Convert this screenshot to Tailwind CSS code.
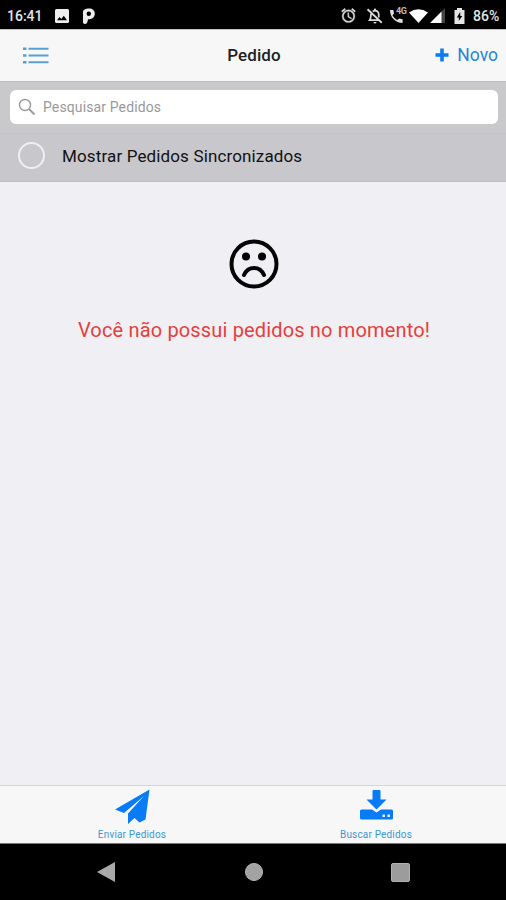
<!DOCTYPE html>
<html lang="pt-BR">
<head>
<meta charset="utf-8">
<meta name="viewport" content="width=device-width, initial-scale=1">
<title>Pedido</title>
<script src="https://cdn.jsdelivr.net/npm/@tailwindcss/browser@4"></script>
</head>
<body class="flex h-[900px] w-[506px] flex-col overflow-hidden bg-[#efeff4] font-['Roboto',sans-serif] text-black">
  <!-- Status bar -->
  <div class="flex h-[29px] shrink-0 items-center bg-black pt-[2px] pl-[7px] text-[#e4e4e4]">
    <span class="w-[48px] text-[14px] leading-none font-medium whitespace-nowrap">16:41</span>
    <svg class="h-[14px] w-[14px]" viewBox="0 0 14 14"><path fill="#eee" fill-rule="evenodd" d="M1.500 0h11A1.500 1.500 0 0 1 14 1.500v11a1.500 1.500 0 0 1-1.500 1.500h-11A1.500 1.500 0 0 1 0 12.500v-11A1.500 1.500 0 0 1 1.500 0ZM2 11.300h10L8.800 6.800 6.300 10 4.500 8Z"/></svg>
    <svg class="ml-[13px] h-[16px] w-[14px]" viewBox="0 0 14 16"><path fill="#eee" fill-rule="evenodd" d="M1 4.500C1 1.500 3.500.500 7 .500c3.500 0 5.800 2 5.800 5.200 0 3.500-2.600 5.600-6.800 5.600L5.500 13.500C5.200 15.200 4.200 16 2.800 16 1.500 16 1 15.200 1 14ZM6.800 3.600A2.200 2.200 0 1 0 6.800 8 2.200 2.200 0 0 0 6.800 3.600Z"/></svg>
    <div class="ml-auto flex items-center pr-[6px]">
      <svg class="h-[17px] w-[17px]" viewBox="0 0 24 24" fill="#ddd" stroke="#ddd" stroke-width=".5"><path d="m22 5.720-4.600-3.860-1.290 1.530 4.600 3.860ZM7.880 3.390 6.600 1.860 2 5.710l1.290 1.530ZM12.500 8H11v6l4.750 2.850.75-1.230-4-2.370ZM12 4a9 9 0 1 0 0 18 9 9 0 0 0 0-18Zm0 16a7 7 0 1 1 0-14 7 7 0 0 1 0 14Z"/></svg>
      <svg class="ml-[9px] h-[18px] w-[18px]" viewBox="0 0 24 24" fill="none" stroke="#ddd" stroke-width="2.300"><path d="M2 3l19 18M7 8.500C6 11 7 15 5 17.500h12M9 6c5-3 8 1 8 4v4"/><path fill="#ddd" stroke="none" d="M10 20h4a2 2 0 0 1-4 0ZM10.500 5V3.500a1.500 1.500 0 0 1 3 0V5Z"/></svg>
      <div class="relative ml-[5px] h-[17px] w-[20px]">
        <svg class="h-[17px] w-[17px]" viewBox="0 0 17 17"><path fill="#ddd" d="M1 3h3.300l.8 3.500-1.600 1.800c1.200 2.100 2.600 3.500 4.700 4.700l1.900-1.600 3.500.8V16C6.500 16 1 10.500 1 3Z"/></svg>
        <span class="absolute top-0 left-[7px] text-[9px] leading-none font-bold tracking-[-0.5px] text-[#bbb]">4G</span>
      </div>
      <svg class="h-[14px] w-[19px]" viewBox="0 0 19 14"><path fill="#fff" d="M0 3.500Q9.500-3 19 3.500L9.500 14Z"/></svg>
      <svg class="ml-[2px] h-[15px] w-[15px]" viewBox="0 0 15 15"><path fill="#444" d="M15 0v15h-4V4Z"/><path fill="#fff" d="M0 15 11.500 3.500V15Z"/></svg>
      <svg class="ml-[9px] h-[16px] w-[11px]" viewBox="0 0 11 16"><path fill="#e5e5e5" d="M3 0h5v2h2.500v14H.500V2H3Z"/><path fill="#000" d="M6.200 4 2.800 9.500h2V13l3.500-5h-2Z"/></svg>
      <span class="ml-[8px] w-[27px] text-[14px] leading-none font-medium whitespace-nowrap">86%</span>
    </div>
  </div>

  <!-- Header -->
  <header class="grid h-[52px] shrink-0 grid-cols-3 items-center border-t border-[#c4c4c4] bg-[#f7f7f7]">
    <svg class="ml-[23px] h-[17px] w-[26px]" viewBox="0 0 26 17"><g fill="#5a9fd2"><path d="M0 .500h3.500v2.500H0zM0 7.300h3.500v2.500H0zM0 14h3.500v2.500H0z"/><path d="M5.500 .8h20v1.900h-20zM5.500 7.600h20v1.900h-20zM5.500 14.300h20v1.900h-20z"/></g></svg>
    <h1 class="ml-[2px] text-center text-[17px] leading-none font-medium tracking-[0.1px] text-[#222]">Pedido</h1>
    <button class="flex items-center justify-end pr-[8px] text-[17.500px] leading-none text-[#2585d5]">
      <svg class="mr-[8px] mb-[2px] h-[14px] w-[14px]" viewBox="0 0 14 14"><path fill="#0a7bf5" d="M5.200.500h3.600v4.700h4.700v3.600H8.800v4.700H5.200V8.800H.500V5.200h4.700Z"/></svg>
      <span>Novo</span>
    </button>
  </header>

  <!-- Search -->
  <div class="h-[52px] shrink-0 border-t border-[#bdbdc0] bg-[#c9c9cb] pt-[8px] pr-[8px] pl-[10px]">
    <div class="flex h-[34px] items-center rounded-[6px] bg-white pl-[8px]">
      <svg class="h-[18px] w-[18px]" viewBox="0 0 18 18" fill="none" stroke="#999" stroke-width="1.400"><circle cx="7" cy="7" r="5.500"/><path stroke-width="1.800" d="m11 11 5.500 5.500"/></svg>
      <span class="mb-px ml-[7px] text-[14px] leading-none tracking-[0.12px] text-[#999]">Pesquisar Pedidos</span>
    </div>
  </div>

  <!-- Filter -->
  <div class="flex h-[49px] shrink-0 items-center border-t border-b border-t-[#c4c4c8] border-b-[#c0c0c5] bg-[#c8c7cc] pl-[18px]">
    <span class="mb-[4px] h-[27px] w-[27px] rounded-full border-2 border-[#f0f0f3]"></span>
    <span class="mb-[2px] ml-[17px] text-[17px] leading-none tracking-[0.14px] text-[#111]">Mostrar Pedidos Sincronizados</span>
  </div>

  <!-- Empty state -->
  <main class="flex flex-1 flex-col items-center pt-[57px]">
    <svg class="ml-[2px] h-[50px] w-[50px]" viewBox="0 0 50 50"><circle cx="25" cy="25" r="22.500" fill="none" stroke="#050505" stroke-width="4"/><circle cx="17" cy="17.500" r="4" fill="#050505"/><circle cx="33" cy="17.500" r="4" fill="#050505"/><path d="M15 36C19 26.500 31 26.500 35 36" fill="none" stroke="#050505" stroke-width="4" stroke-linecap="round"/></svg>
    <p class="mt-[31px] ml-[2px] text-[20px] leading-none tracking-[0.16px] whitespace-nowrap text-[#e5403a]">Você não possui pedidos no momento!</p>
  </main>

  <!-- Tab bar -->
  <nav class="flex h-[58px] shrink-0 border-t border-[#d5d5d7] bg-[#f7f7f7] pr-[8px] pl-[10px] text-[10px] leading-none text-[#3b97d3]">
    <a class="flex flex-1 flex-col items-center pt-[3px]">
      <svg class="h-[35px] w-[35px]" viewBox="0 0 35 35"><path fill="#087bf7" d="M34.500.500 0 20.500 9 24 29 7 13 24.500V35L19.500 29 24.500 33.500 30.500 30.500Z"/></svg>
      <span class="mt-[6px] tracking-[0.17px] whitespace-nowrap">Enviar Pedidos</span>
    </a>
    <a class="flex flex-1 flex-col items-center pt-[3px]">
      <svg class="h-[35px] w-[33px]" viewBox="0 0 33 35"><path fill="#087bf7" d="M13.500 1h6a1 1 0 0 1 1 1v8.500h6L16.500 20.500l-10-10h6V2a1 1 0 0 1 1-1Z"/><path fill="#087bf7" fill-rule="evenodd" d="M1.500 20.500H12l4.500 3 4.500-3h10.500a1.500 1.500 0 0 1 1.500 1.500v7a1.500 1.500 0 0 1-1.500 1.500h-30A1.500 1.500 0 0 1 0 29v-7a1.500 1.500 0 0 1 1.500-1.500ZM22.500 25.500v2.400h2.400v-2.400Zm5 0v2.400h2.400v-2.400Z"/></svg>
      <span class="mt-[6px] tracking-[0.17px] whitespace-nowrap">Buscar Pedidos</span>
    </a>
  </nav>

  <!-- System navigation -->
  <div class="flex h-[57px] shrink-0 items-center border-t border-[#777] bg-black pl-[97px]">
    <svg class="h-[20px] w-[18px]" viewBox="0 0 18 20"><path fill="#aaa" d="M0 10 18 0v20Z"/></svg>
    <span class="ml-[130px] h-[18px] w-[18px] rounded-full border border-[#b8b8b8] bg-[#a3a3a3]"></span>
    <span class="ml-[128px] h-[19px] w-[19px] rounded-[2px] border border-[#b0b0b0] bg-[#9c9c9c]"></span>
  </div>
</body>
</html>
